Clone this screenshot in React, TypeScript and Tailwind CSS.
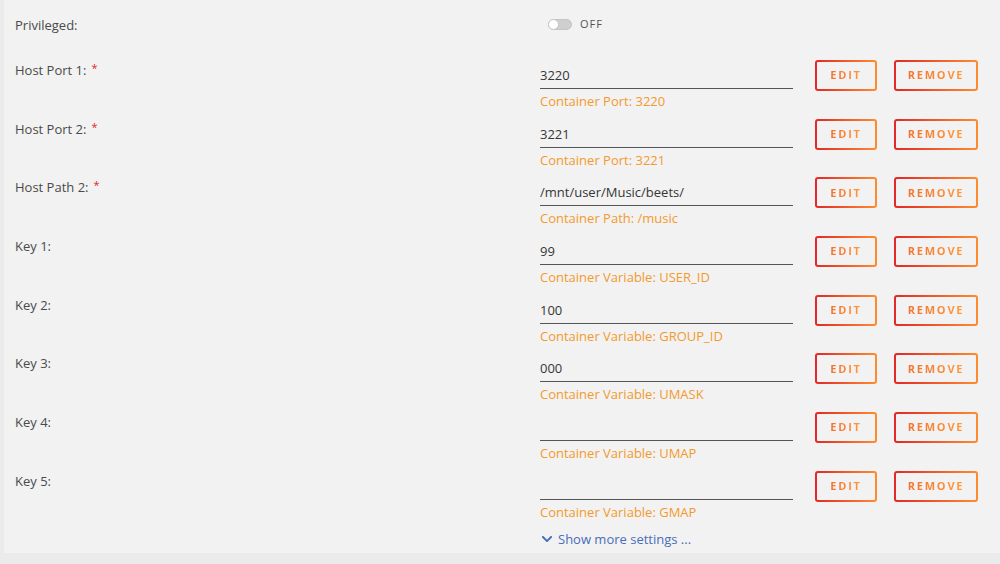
import { FaChevronDown } from "react-icons/fa";

type Row = {
  label: string;
  required?: boolean;
  value: string;
  caption: string;
};

const rows: Row[] = [
  { label: "Host Port 1:", required: true, value: "3220", caption: "Container Port: 3220" },
  { label: "Host Port 2:", required: true, value: "3221", caption: "Container Port: 3221" },
  { label: "Host Path 2:", required: true, value: "/mnt/user/Music/beets/", caption: "Container Path: /music" },
  { label: "Key 1:", value: "99", caption: "Container Variable: USER_ID" },
  { label: "Key 2:", value: "100", caption: "Container Variable: GROUP_ID" },
  { label: "Key 3:", value: "000", caption: "Container Variable: UMASK" },
  { label: "Key 4:", value: "", caption: "Container Variable: UMAP" },
  { label: "Key 5:", value: "", caption: "Container Variable: GMAP" },
];

function GradientButton({ children, width }: { children: string; width: string }) {
  return (
    <button
      className={`${width} h-[31px] rounded-[3px] border-2 border-transparent [background:linear-gradient(#f2f2f2,#f2f2f2)_padding-box,linear-gradient(90deg,#e22828,#ff8c2f)_border-box] flex items-center justify-center`}
    >
      <span className="text-[11px] font-bold tracking-[1.8px] bg-[linear-gradient(90deg,#f4712f,#ff9a3c)] bg-clip-text text-transparent">
        {children}
      </span>
    </button>
  );
}

function SettingRow({ row }: { row: Row }) {
  return (
    <div className="h-[58.7px] flex items-start">
      <div className="w-[525px] pt-[4px] text-[13px] leading-4 text-[#4a4a4a]">
        {row.label}
        {row.required && (
          <span className="relative -top-[3px] ml-[5px] text-[11px] text-[#e22828]">*</span>
        )}
      </div>
      <div className="w-[253px] pt-[5px]">
        <div className="h-[26px] border-b border-[#555] text-[13px] leading-[20px] text-[#363636] pt-[2px]">
          {row.value}
        </div>
        <div className="mt-[4px] text-[13px] leading-4 text-[#f29a2e]">{row.caption}</div>
      </div>
      <div className="ml-[22px] pt-[2px] flex gap-[17px]">
        <GradientButton width="w-[62px]">EDIT</GradientButton>
        <GradientButton width="w-[84px]">REMOVE</GradientButton>
      </div>
    </div>
  );
}

export default function App() {
  return (
    <div className="w-[1000px] h-[564px] bg-[#ebebeb] overflow-hidden font-['Open_Sans',sans-serif]">
      <div className="ml-[4px] h-[553px] bg-[#f2f2f2] pl-[11px]">
        <div className="h-[58px] flex items-start pt-[17px]">
          <div className="w-[525px] text-[13px] leading-4 text-[#4a4a4a]">Privileged:</div>
          <div className="flex items-center gap-[8px] -mt-[1px] pl-[8px]">
            <div className="w-[24px] h-[11px] rounded-full bg-[#cfcfcf] border border-[#c4c4c4] relative">
              <div className="absolute -left-[1px] -top-[1px] w-[11px] h-[11px] rounded-full bg-white border border-[#c4c4c4]" />
            </div>
            <span className="text-[11px] tracking-[1px] text-[#555]">OFF</span>
          </div>
        </div>
        {rows.map((r) => (
          <SettingRow key={r.label} row={r} />
        ))}
        <div className="pl-[525px] mt-[2px] flex items-center gap-[5px] text-[13px] text-[#486dba]">
          <FaChevronDown className="text-[12px] ml-[1px]" />
          <span>Show more settings ...</span>
        </div>
      </div>
    </div>
  );
}
